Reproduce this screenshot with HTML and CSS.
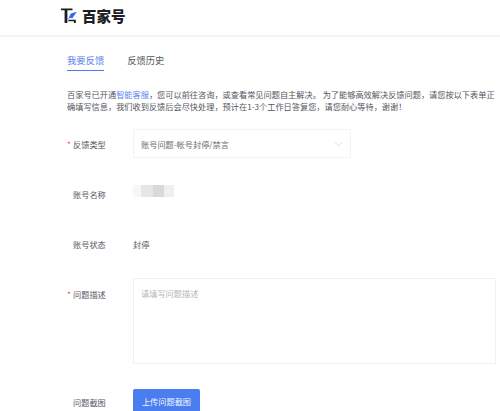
FILE: index.html
```html
<!DOCTYPE html>
<html lang="zh-CN">
<head>
<meta charset="utf-8">
<title>百家号</title>
<link rel="stylesheet" href="styles.css">
</head>
<body>
<header class="top">
  <svg class="logo-mark" viewBox="0 0 16 16" aria-hidden="true">
    <path d="M0 1h11.5v1.7H6.4V15.5H3.6V2.7H0z" fill="#1c1f26"/>
    <path d="M15.8 4.2 9.8 6 7.2 11.5l2.5-1.3 1.5.7z" fill="#2f6bf0"/>
    <path d="M7.4 12.2h7.4v3.3h-1.9v-1.7H7.4z" fill="#1c1f26"/>
  </svg>
  <span class="logo-text">百家号</span>
</header>
<main class="content">
  <nav class="tabs">
    <span class="tab active">我要反馈</span>
    <span class="tab">反馈历史</span>
  </nav>
  <p class="intro">百家号已开通<span class="link">智能客服</span>，您可以前往咨询，或查看常见问题自主解决。 为了能够高效解决反馈问题，请您按以下表单正确填写信息，我们收到反馈后会尽快处理，预计在1-3个工作日答复您，请您耐心等待，谢谢！</p>
  <form class="form">
    <div class="row row-type">
      <label class="label req">反馈类型</label>
      <div class="select">
        <span>账号问题-帐号封停/禁言</span>
        <svg class="chev" viewBox="0 0 10 6" aria-hidden="true"><path d="M1 1l4 4 4-4" fill="none" stroke="#d5d8de" stroke-width="1"/></svg>
      </div>
    </div>
    <div class="row row-name">
      <label class="label">账号名称</label>
      <div class="blur-name"><i class="b1"></i><i class="b2"></i><i class="b3"></i><i class="b4"></i></div>
    </div>
    <div class="row row-state">
      <label class="label">账号状态</label>
      <span class="value">封停</span>
    </div>
    <div class="row row-desc">
      <label class="label req">问题描述</label>
      <div class="textarea">请填写问题描述</div>
    </div>
    <div class="row row-shot">
      <label class="label">问题截图</label>
      <button type="button" class="upload">上传问题截图</button>
    </div>
  </form>
</main>
</body>
</html>
```
FILE: styles.css
```css
* { box-sizing: border-box; }
html, body { margin: 0; padding: 0; height: 411px; overflow: hidden; background: #fff; }
body { font-family: "Noto Sans CJK SC", "Liberation Sans", sans-serif; font-size: 8.2px; line-height: 12px; color: #4a4d55; }

.top { height: 37px; padding: 7px 0 0 61px; border-bottom: 2px solid #f5f5f6; display: flex; align-items: flex-start; gap: 5px; }
.logo-mark { width: 16px; height: 17px; }
.logo-text { font-size: 14.5px; line-height: 17px; font-weight: 900; color: #1c1f26; }

.content { padding: 0 3px 0 67px; }
.tabs { display: flex; gap: 23px; padding-top: 16px; }
.tab { height: 18px; line-height: 14px; font-size: 9.3px; color: #555860; }
.tab.active { color: #5b7fe8; border-bottom: 1px solid #4e78ea; }

.intro { margin: 18px 0 0; font-size: 8.2px; line-height: 11.5px; color: #53565d; }
.link { color: #5b86ee; }

.row { display: flex; position: relative; }
.label { width: 66px; padding-left: 6px; flex: none; color: #55585f; }
.req::before { content: "*"; position: absolute; left: 0; color: #ef6a6a; }

.row-type { margin-top: 17px; height: 29px; align-items: center; }
.select { width: 218px; height: 29px; padding: 0 7px; border: 1px solid #f3f3f4; display: flex; align-items: center; justify-content: space-between; color: #6a6d74; }
.chev { width: 9px; height: 6px; }

.row-name { margin-top: 27px; height: 20px; }
.row-name .label { padding-top: 3px; }
.blur-name { display: flex; height: 12px; }
.blur-name i { display: block; height: 12px; }
.b1 { width: 8px; background: #f7f7f7; }
.b2 { width: 12px; background: #e6e6e6; }
.b3 { width: 11px; background: #d9d9d9; }
.b4 { width: 10px; background: #efefef; }

.row-state { margin-top: 33px; height: 20px; }
.value { color: #55585f; }

.row-desc { margin-top: 20px; height: 86px; }
.row-desc .label { padding-top: 10px; }
.textarea { width: 363px; height: 86px; padding: 8px 7px; border: 1px solid #f1f1f2; color: #b4b6bb; }

.row-shot { margin-top: 25px; }
.row-shot .label { padding-top: 7px; }
.upload { width: 67px; height: 24px; border: 0; border-radius: 2px 2px 0 0; padding: 0; background: #4a7df0; color: #f2f5ff; font: inherit; }
```
